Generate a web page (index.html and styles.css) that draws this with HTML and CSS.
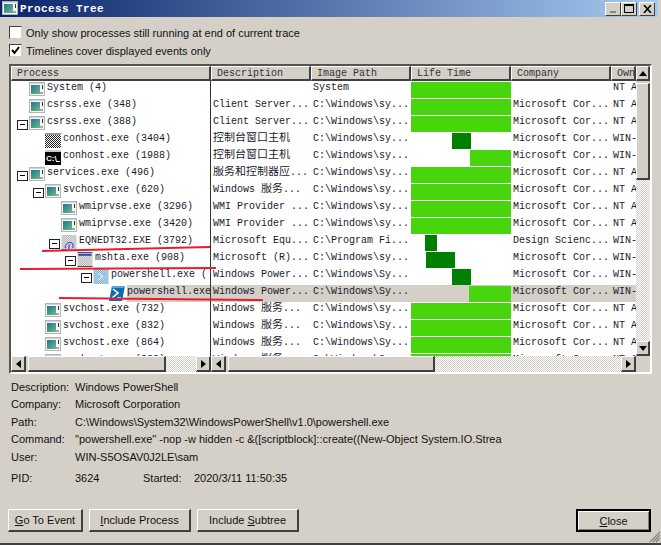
FILE: index.html
```html
<!DOCTYPE html>
<html lang="en">
<head>
  <meta charset="UTF-8">
  <meta name="viewport" content="width=device-width, initial-scale=1.0">
  <title>Process Tree</title>
  <link rel="stylesheet" href="styles.css">
</head>
<body>
  <!-- icon sheet -->
  <svg class="defs" width="0" height="0">
    <defs>
      <linearGradient id="teal" x1="0" y1="0" x2="1" y2="1">
        <stop offset="0" stop-color="#1d7596"/>
        <stop offset="1" stop-color="#6cbc80"/>
      </linearGradient>
      <pattern id="dither-black" width="2" height="2" patternUnits="userSpaceOnUse">
        <rect width="2" height="2" fill="#fff"/>
        <rect width="1" height="1" fill="#222"/>
        <rect x="1" y="1" width="1" height="1" fill="#222"/>
      </pattern>
      <pattern id="dither-gray" width="2" height="2" patternUnits="userSpaceOnUse">
        <rect width="2" height="2" fill="#fff"/>
        <rect width="1" height="1" fill="#999"/>
        <rect x="1" y="1" width="1" height="1" fill="#999"/>
      </pattern>
      <pattern id="dither-blue" width="2" height="2" patternUnits="userSpaceOnUse">
        <rect width="2" height="2" fill="#fff"/>
        <rect width="1" height="1" fill="#3f8cc8"/>
        <rect x="1" y="1" width="1" height="1" fill="#3f8cc8"/>
      </pattern>
      <symbol id="i-app" viewBox="0 0 16 15">
        <rect x="0.5" y="0.5" width="15" height="13" fill="#f6f6f6" stroke="#b4b4b4"/>
        <rect x="1" y="1" width="14" height="1" fill="#d0d4d8"/>
        <rect x="2" y="3" width="9" height="9" fill="url(#teal)"/>
        <rect x="11" y="10" width="3" height="2" fill="#a8a8a8"/>
        <rect x="13" y="3" width="1" height="4" fill="#333"/>
      </symbol>
      <symbol id="i-dither" viewBox="0 0 16 15">
        <rect width="16" height="15" fill="url(#dither-black)"/>
        <rect y="0" width="16" height="2" fill="#999"/>
      </symbol>
      <symbol id="i-cmd" viewBox="0 0 16 15">
        <rect width="16" height="15" fill="#000"/>
        <rect x="0" y="0" width="16" height="2" fill="#c8c8c8"/>
        <text x="1" y="11" class="cmd-text">C:\</text>
        <rect x="11" y="11" width="4" height="1" fill="#fff"/>
      </symbol>
      <symbol id="i-eqn" viewBox="0 0 16 16">
        <rect width="16" height="16" fill="url(#dither-gray)"/>
        <path d="M4 14 C4 9 7 8 9 8 C12 8 13 10 12 14 M8 10 L8 15" fill="none" stroke="#1a2ee0"/>
        <rect x="0" y="15" width="5" height="1" fill="#c03030"/>
      </symbol>
      <symbol id="i-hta" viewBox="0 0 16 16">
        <rect width="16" height="16" fill="url(#dither-gray)"/>
        <rect x="0" y="0" width="16" height="1" fill="#444"/>
        <rect x="1" y="2" width="14" height="2" fill="#2040c0"/>
        <rect x="0" y="15" width="16" height="1" fill="#444"/>
      </symbol>
      <symbol id="i-psd" viewBox="0 0 16 16">
        <rect width="16" height="16" fill="url(#dither-blue)"/>
        <path d="M5 5 L10 8 L5 12" fill="none" stroke="#fff"/>
      </symbol>
      <symbol id="i-ps" viewBox="0 0 16 15">
        <path d="M3 0 H16 L13 15 H0 Z" fill="#0f6cb4"/>
        <path d="M3 0 H16 L15.6 2 H2.6 Z" fill="#52a8e0"/>
        <path d="M4 3 L9 7 L3 12" fill="none" stroke="#fff" stroke-width="1.6"/>
        <rect x="8" y="11" width="4" height="1.4" fill="#fff"/>
      </symbol>
    </defs>
  </svg>

  <div class="window">
    <div class="titlebar">
      <svg class="title-icon"><use href="#i-app"/></svg>
      <span class="title-text">Process Tree</span>
      <div class="title-buttons">
        <button class="cap-btn"><span class="cap-min"></span></button>
        <button class="cap-btn"><span class="cap-max"></span></button>
        <button class="cap-btn cap-close">
          <svg width="9" height="8"><path d="M1 0 L8 8 M8 0 L1 8" stroke="#000" stroke-width="1.6"/></svg>
        </button>
      </div>
    </div>

    <div class="options">
      <label class="check-row"><span class="check"></span>Only show processes still running at end of current trace</label>
      <label class="check-row">
        <span class="check"><svg width="9" height="9"><path d="M1 4 L3.5 7 L8 1" fill="none" stroke="#000" stroke-width="2"/></svg></span>
        Timelines cover displayed events only
      </label>
    </div>

    <!-- process list -->
    <div class="listbox">
      <div class="list-main">
        <div class="list-head">
          <div class="head-cell head-tree">Process</div>
          <div class="head-cell">Description</div>
          <div class="head-cell">Image Path</div>
          <div class="head-cell">Life Time</div>
          <div class="head-cell">Company</div>
          <div class="head-cell">Own</div>
        </div>

        <div class="list-body">
          <div class="row">
            <div class="tree lv0"><span class="slot"></span><svg class="icon"><use href="#i-app"/></svg><span class="name">System (4)</span></div>
            <div class="cell"></div>
            <div class="cell">System</div>
            <div class="life"><div class="bar" style="margin-left:0;width:100px"></div></div>
            <div class="cell"></div>
            <div class="cell">NT A</div>
          </div>
          <div class="row">
            <div class="tree lv0"><span class="slot"></span><svg class="icon"><use href="#i-app"/></svg><span class="name">csrss.exe (348)</span></div>
            <div class="cell">Client Server...</div>
            <div class="cell">C:\Windows\sy...</div>
            <div class="life"><div class="bar" style="margin-left:0;width:100px"></div></div>
            <div class="cell">Microsoft Cor...</div>
            <div class="cell">NT A</div>
          </div>
          <div class="row">
            <div class="tree lv0"><span class="slot"><span class="toggle"></span></span><svg class="icon"><use href="#i-app"/></svg><span class="name">csrss.exe (388)</span></div>
            <div class="cell">Client Server...</div>
            <div class="cell">C:\Windows\sy...</div>
            <div class="life"><div class="bar" style="margin-left:0;width:100px"></div></div>
            <div class="cell">Microsoft Cor...</div>
            <div class="cell">NT A</div>
          </div>
          <div class="row">
            <div class="tree lv1"><span class="slot"></span><svg class="icon"><use href="#i-dither"/></svg><span class="name">conhost.exe (3404)</span></div>
            <div class="cell"><span class="cn">控制台窗口主机</span></div>
            <div class="cell">C:\Windows\sy...</div>
            <div class="life"><div class="bar dark" style="margin-left:41px;width:19px"></div></div>
            <div class="cell">Microsoft Cor...</div>
            <div class="cell">WIN-</div>
          </div>
          <div class="row">
            <div class="tree lv1"><span class="slot"></span><svg class="icon"><use href="#i-cmd"/></svg><span class="name">conhost.exe (1988)</span></div>
            <div class="cell"><span class="cn">控制台窗口主机</span></div>
            <div class="cell">C:\Windows\sy...</div>
            <div class="life"><div class="bar" style="margin-left:59px;width:41px"></div></div>
            <div class="cell">Microsoft Cor...</div>
            <div class="cell">WIN-</div>
          </div>
          <div class="row">
            <div class="tree lv0"><span class="slot"><span class="toggle"></span></span><svg class="icon"><use href="#i-app"/></svg><span class="name">services.exe (496)</span></div>
            <div class="cell"><span class="cn">服务和控制器应</span>...</div>
            <div class="cell">C:\Windows\sy...</div>
            <div class="life"><div class="bar" style="margin-left:0;width:100px"></div></div>
            <div class="cell">Microsoft Cor...</div>
            <div class="cell">NT A</div>
          </div>
          <div class="row">
            <div class="tree lv1"><span class="slot"><span class="toggle"></span></span><svg class="icon"><use href="#i-app"/></svg><span class="name">svchost.exe (620)</span></div>
            <div class="cell">Windows <span class="cn">服务</span>...</div>
            <div class="cell">C:\Windows\sy...</div>
            <div class="life"><div class="bar" style="margin-left:0;width:100px"></div></div>
            <div class="cell">Microsoft Cor...</div>
            <div class="cell">NT A</div>
          </div>
          <div class="row">
            <div class="tree lv2"><span class="slot"></span><svg class="icon"><use href="#i-app"/></svg><span class="name">wmiprvse.exe (3296)</span></div>
            <div class="cell">WMI Provider ...</div>
            <div class="cell">C:\Windows\sy...</div>
            <div class="life"><div class="bar" style="margin-left:0;width:100px"></div></div>
            <div class="cell">Microsoft Cor...</div>
            <div class="cell">NT A</div>
          </div>
          <div class="row">
            <div class="tree lv2"><span class="slot"></span><svg class="icon"><use href="#i-app"/></svg><span class="name">wmiprvse.exe (3420)</span></div>
            <div class="cell">WMI Provider ...</div>
            <div class="cell">C:\Windows\sy...</div>
            <div class="life"><div class="bar" style="margin-left:0;width:100px"></div></div>
            <div class="cell">Microsoft Cor...</div>
            <div class="cell">NT A</div>
          </div>
          <div class="row">
            <div class="tree lv2"><span class="slot"><span class="toggle"></span></span><svg class="icon"><use href="#i-eqn"/></svg><span class="name">EQNEDT32.EXE (3792)</span></div>
            <div class="cell">Microsoft Equ...</div>
            <div class="cell">C:\Program Fi...</div>
            <div class="life"><div class="bar dark" style="margin-left:14px;width:12px"></div></div>
            <div class="cell">Design Scienc...</div>
            <div class="cell">WIN-</div>
          </div>
          <div class="row">
            <div class="tree lv3"><span class="slot"><span class="toggle"></span></span><svg class="icon"><use href="#i-hta"/></svg><span class="name">mshta.exe (908)</span></div>
            <div class="cell">Microsoft (R)...</div>
            <div class="cell">C:\Windows\sy...</div>
            <div class="life"><div class="bar dark" style="margin-left:15px;width:29px"></div></div>
            <div class="cell">Microsoft Cor...</div>
            <div class="cell">WIN-</div>
          </div>
          <div class="row">
            <div class="tree lv4"><span class="slot"><span class="toggle"></span></span><svg class="icon"><use href="#i-psd"/></svg><span class="name">powershell.exe (</span></div>
            <div class="cell">Windows Power...</div>
            <div class="cell">C:\Windows\Sy...</div>
            <div class="life"><div class="bar dark" style="margin-left:41px;width:19px"></div></div>
            <div class="cell">Microsoft Cor...</div>
            <div class="cell">WIN-</div>
          </div>
          <div class="row selected">
            <div class="tree lv5"><span class="slot"></span><svg class="icon"><use href="#i-ps"/></svg><span class="name">powershell.exe</span></div>
            <div class="cell">Windows Power...</div>
            <div class="cell">C:\Windows\Sy...</div>
            <div class="life"><div class="bar" style="margin-left:58px;width:42px"></div></div>
            <div class="cell">Microsoft Cor...</div>
            <div class="cell">WIN-</div>
          </div>
          <div class="row">
            <div class="tree lv1"><span class="slot"></span><svg class="icon"><use href="#i-app"/></svg><span class="name">svchost.exe (732)</span></div>
            <div class="cell">Windows <span class="cn">服务</span>...</div>
            <div class="cell">C:\Windows\sy...</div>
            <div class="life"><div class="bar" style="margin-left:0;width:100px"></div></div>
            <div class="cell">Microsoft Cor...</div>
            <div class="cell">NT A</div>
          </div>
          <div class="row">
            <div class="tree lv1"><span class="slot"></span><svg class="icon"><use href="#i-app"/></svg><span class="name">svchost.exe (832)</span></div>
            <div class="cell">Windows <span class="cn">服务</span>...</div>
            <div class="cell">C:\Windows\Sy...</div>
            <div class="life"><div class="bar" style="margin-left:0;width:100px"></div></div>
            <div class="cell">Microsoft Cor...</div>
            <div class="cell">NT A</div>
          </div>
          <div class="row">
            <div class="tree lv1"><span class="slot"></span><svg class="icon"><use href="#i-app"/></svg><span class="name">svchost.exe (864)</span></div>
            <div class="cell">Windows <span class="cn">服务</span>...</div>
            <div class="cell">C:\Windows\Sy...</div>
            <div class="life"><div class="bar" style="margin-left:0;width:100px"></div></div>
            <div class="cell">Microsoft Cor...</div>
            <div class="cell">NT A</div>
          </div>
          <div class="row">
            <div class="tree lv1"><span class="slot"></span><svg class="icon"><use href="#i-app"/></svg><span class="name">svchost.exe (888)</span></div>
            <div class="cell">Windows <span class="cn">服务</span>...</div>
            <div class="cell">C:\Windows\Sy...</div>
            <div class="life"><div class="bar" style="margin-left:0;width:100px"></div></div>
            <div class="cell">Microsoft Cor...</div>
            <div class="cell">NT A</div>
          </div>
        </div>

        <!-- bottom scrollbars -->
        <div class="hbars">
          <div class="hbar hbar-tree">
            <div class="raised arrow-btn"><span class="tri tri-left"></span></div>
            <div class="raised thumb thumb-tree"></div>
            <div class="track"></div>
            <div class="raised arrow-btn"><span class="tri tri-right"></span></div>
          </div>
          <div class="hbar hbar-cols">
            <div class="raised arrow-btn"><span class="tri tri-left"></span></div>
            <div class="raised thumb thumb-cols"></div>
            <div class="track"></div>
            <div class="raised arrow-btn"><span class="tri tri-right"></span></div>
          </div>
        </div>
      </div>

      <div class="vbar">
        <div class="raised arrow-btn"><span class="tri tri-up"></span></div>
        <div class="raised thumb thumb-v"></div>
        <div class="track"></div>
        <div class="raised arrow-btn"><span class="tri tri-down"></span></div>
        <div class="corner"></div>
      </div>
    </div>

    <!-- details of selected process -->
    <div class="details">
      <div class="detail-row"><span class="detail-label">Description:</span><span>Windows PowerShell</span></div>
      <div class="detail-row"><span class="detail-label">Company:</span><span>Microsoft Corporation</span></div>
      <div class="detail-row"><span class="detail-label">Path:</span><span>C:\Windows\System32\WindowsPowerShell\v1.0\powershell.exe</span></div>
      <div class="detail-row"><span class="detail-label">Command:</span><span>"powershell.exe" -nop -w hidden -c &amp;([scriptblock]::create((New-Object System.IO.Strea</span></div>
      <div class="detail-row"><span class="detail-label">User:</span><span>WIN-S5OSAV0J2LE\sam</span></div>
      <div class="detail-row detail-pid">
        <span class="detail-label">PID:</span><span class="pid-value">3624</span>
        <span class="started-label">Started:</span><span>2020/3/11 11:50:35</span>
      </div>
    </div>

    <div class="actions">
      <button class="btn btn-event"><u>G</u>o To Event</button>
      <button class="btn btn-wide"><u>I</u>nclude Process</button>
      <button class="btn btn-wide">Include <u>S</u>ubtree</button>
      <button class="btn btn-close"><u>C</u>lose</button>
    </div>

    <div class="grip">
      <svg width="12" height="12"><path d="M11 1 L1 11 M11 4 L4 11 M11 7 L7 11" stroke="#808080" stroke-width="1.2"/></svg>
    </div>

    <!-- red marker lines drawn over the screenshot -->
    <svg class="marks" width="661" height="545">
      <path d="M42 251 L210 247" />
      <path d="M20 269 L216 268" />
      <path d="M59 298 L263 300" />
    </svg>
  </div>
</body>
</html>
```

FILE: styles.css
```css
* {
  box-sizing: border-box;
}

body {
  margin: 0;
  overflow: hidden;
  background-color: #d4d0c8;
  font-family: "Liberation Sans", Arial, sans-serif;
  font-size: 11px;
  color: #111;
}

.defs {
  position: absolute;
}

.cmd-text {
  font-family: "Liberation Sans", sans-serif;
  font-size: 8px;
  font-weight: bold;
  fill: #fff;
}

.window {
  position: relative;
  width: 661px;
  height: 545px;
  display: flex;
  flex-direction: column;
  border-bottom: 2px solid #404040;
}

/* title bar */
.titlebar {
  height: 17px;
  margin-right: 3px;
  display: flex;
  align-items: center;
  padding-left: 2px;
  background: linear-gradient(to right, #0a246a, #a6caf0);
}

.title-icon {
  width: 16px;
  height: 15px;
}

.title-text {
  margin-left: 2px;
  font-family: "Liberation Mono", monospace;
  font-size: 11px;
  font-weight: bold;
  letter-spacing: 0.4px;
  color: #fff;
}

.title-buttons {
  margin-left: auto;
  display: flex;
  padding-right: 3px;
}

.cap-btn {
  width: 16px;
  height: 14px;
  padding: 0;
  display: flex;
  align-items: center;
  justify-content: center;
  background-color: #d4d0c8;
  border: 1px solid;
  border-color: #fff #404040 #404040 #fff;
}

.cap-close {
  margin-left: 2px;
}

.cap-min {
  width: 6px;
  height: 2px;
  margin-top: 7px;
  background-color: #888;
}

.cap-max {
  width: 10px;
  height: 9px;
  border: 1px solid #000;
  border-top-width: 2px;
}

/* checkboxes */
.options {
  padding: 9px 0 0 9px;
  display: flex;
  flex-direction: column;
  gap: 5px;
}

.check-row {
  height: 13px;
  display: flex;
  align-items: center;
}

.check {
  width: 13px;
  height: 13px;
  margin-right: 4px;
  display: flex;
  align-items: center;
  justify-content: center;
  background-color: #fff;
  border: 1px solid;
  border-color: #404040 #d4d0c8 #d4d0c8 #404040;
}

/* list */
.listbox {
  width: 643px;
  height: 310px;
  margin: 7px 0 0 9px;
  display: flex;
  border: 2px solid;
  border-color: #555 #fff #fff #555;
  background-color: #d4d0c8;
  font-family: "Liberation Mono", "Noto Sans CJK SC", monospace;
  font-size: 10px;
}

.list-main {
  width: 625px;
  display: flex;
  flex-direction: column;
}

.list-head {
  display: grid;
  grid-template-columns: 200px 100px 100px 100px 100px 25px;
  height: 15px;
  overflow: hidden;
}

.head-cell {
  padding: 1px 0 0 5px;
  line-height: 12px;
  color: #333;
  white-space: nowrap;
  overflow: hidden;
  background-color: #d4d0c8;
  border: 1px solid;
  border-color: #fff #404040 #404040 #fff;
  border-width: 1px 2px 2px 1px;
}

.list-body {
  height: 275px;
  overflow: hidden;
  background-color: #fff;
}

.row {
  display: grid;
  grid-template-columns: 200px 100px 100px 100px 100px 25px;
  height: 17px;
  color: #1a1a2a;
}

.tree {
  display: flex;
  border-right: 1px solid #333;
  overflow: hidden;
  white-space: nowrap;
}

.lv0 { padding-left: 5px; }
.lv1 { padding-left: 21px; }
.lv2 { padding-left: 37px; }
.lv3 { padding-left: 53px; }
.lv4 { padding-left: 69px; }
.lv5 { padding-left: 85px; }

.slot {
  width: 13px;
  flex: none;
  padding: 5px 0 0 1px;
}

.toggle {
  display: block;
  position: relative;
  width: 11px;
  height: 10px;
  border: 1px solid #222;
  background-color: #fff;
}

.toggle::after {
  content: "";
  position: absolute;
  left: 2px;
  top: 3px;
  width: 5px;
  height: 1px;
  background-color: #000;
}

.icon {
  width: 16px;
  height: 15px;
  margin-top: 1px;
  flex: none;
}

.name {
  margin-left: 2px;
  line-height: 13px;
}

.cell {
  padding-left: 2px;
  line-height: 13px;
  white-space: nowrap;
  overflow: hidden;
}

.cn {
  font-size: 11px;
}

.life {
  padding-top: 1px;
}

.bar {
  height: 16px;
  background-color: #47d60c;
}

.bar.dark {
  background-color: #008000;
}

.selected .cell,
.selected .life,
.selected .name {
  background-color: #d4d0c8;
}

.selected .name {
  flex: 1;
}

/* scrollbars */
.raised {
  background-color: #d4d0c8;
  border: solid;
  border-color: #fff #404040 #404040 #fff;
  border-width: 1px 2px 2px 1px;
}

.track {
  flex: 1;
  background: repeating-conic-gradient(#d4d0c8 0 25%, #fff 0 50%) 0 0 / 2px 2px;
}

.arrow-btn {
  flex: none;
  display: flex;
  align-items: center;
  justify-content: center;
}

.tri {
  width: 0;
  height: 0;
  border: 4px solid transparent;
}

.tri-left {
  border-left-width: 0;
  border-right: 5px solid #000;
}

.tri-right {
  border-right-width: 0;
  border-left: 5px solid #000;
}

.tri-up {
  border-top-width: 0;
  border-bottom: 5px solid #000;
}

.tri-down {
  border-bottom-width: 0;
  border-top: 5px solid #000;
}

.hbars {
  display: flex;
  height: 16px;
}

.hbar {
  display: flex;
  height: 16px;
}

.hbar .arrow-btn {
  width: 15px;
}

.hbar-tree {
  width: 200px;
}

.hbar-cols {
  width: 425px;
}

.thumb-tree {
  width: 138px;
  margin-left: 2px;
}

.thumb-cols {
  width: 207px;
  margin-left: 2px;
}

.vbar {
  width: 14px;
  display: flex;
  flex-direction: column;
}

.vbar .arrow-btn {
  height: 15px;
}

.thumb-v {
  height: 97px;
  margin-top: 2px;
}

.corner {
  height: 16px;
}

/* details */
.details {
  padding: 5px 0 0 11px;
}

.detail-row {
  display: flex;
  height: 17.4px;
  line-height: 17px;
  white-space: nowrap;
}

.detail-label {
  width: 64px;
}

.detail-pid {
  margin-top: 4px;
}

.pid-value {
  width: 68px;
}

.started-label {
  width: 51px;
}

/* bottom buttons */
.actions {
  margin-top: auto;
  padding: 0 10px 11px 8px;
  display: flex;
  gap: 6px;
}

.btn {
  height: 23px;
  padding: 0;
  font: inherit;
  color: #111;
  background-color: #d4d0c8;
  border: solid;
  border-color: #fff #404040 #404040 #fff;
  border-width: 1px 2px 2px 1px;
}

.btn-event {
  width: 75px;
}

.btn-wide {
  width: 102px;
}

.btn-close {
  width: 75px;
  margin-left: auto;
  border: 2px solid #000;
  box-shadow: inset 1px 1px 0 #fff, inset -1px -1px 0 #808080;
}

.grip {
  position: absolute;
  right: 0;
  bottom: 0;
  height: 12px;
}

.marks {
  position: absolute;
  left: 0;
  top: 0;
  pointer-events: none;
}

.marks path {
  fill: none;
  stroke: #ea1c2c;
  stroke-width: 2;
}
```
